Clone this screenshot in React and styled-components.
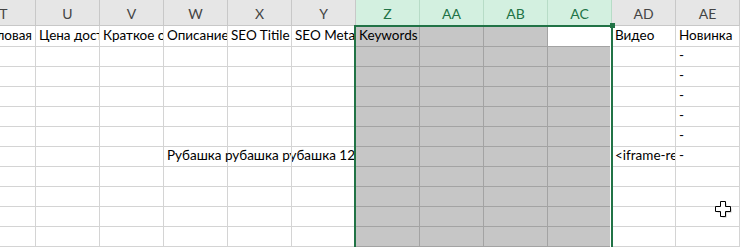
import React from "react";
import styled, { createGlobalStyle } from "styled-components";

const GlobalStyle = createGlobalStyle`
  html, body { margin: 0; padding: 0; background: #ffffff; }
  body { overflow: hidden; font-family: Lato, "Liberation Sans", sans-serif; }
`;

const COLS = ["T", "U", "V", "W", "X", "Y", "Z", "AA", "AB", "AC", "AD", "AE"];
const SELECTED = new Set(["Z", "AA", "AB", "AC"]);

const ROWS = [
  { T: "ловая", U: "Цена доставки", V: "Краткое описание", W: "Описание", X: "SEO Titile", Y: "SEO Meta Description", Z: "Keywords", AD: "Видео", AE: "Новинка" },
  { AE: "-" },
  { AE: "-" },
  { AE: "-" },
  { AE: "-" },
  { AE: "-" },
  { W: "Рубашка рубашка рубашка 123", AD: "<iframe-responsive", AE: "-" },
  {},
  {},
  {},
  {},
];

const SPILL = { 6: "W" };

const Sheet = styled.div`
  position: relative;
  width: 740px;
  height: 247px;
  overflow: hidden;
  display: grid;
  grid-template-columns: 36px repeat(11, 64px);
  grid-template-rows: 26px 21px repeat(10, 20px);
  font-family: Lato, "Liberation Sans", sans-serif;
  font-size: 13.5px;
  line-height: 16px;
  color: #000;
`;

const HeaderCell = styled.div`
  box-sizing: border-box;
  display: flex;
  align-items: flex-end;
  justify-content: ${(p) => (p.$partial ? "flex-end" : "center")};
  overflow: hidden;
  padding-bottom: 3px;
  font-size: 14px;
  background: ${(p) => (p.$selected ? "#d3f0e0" : "#e6e6e6")};
  color: ${(p) => (p.$selected ? "#217346" : "#444444")};
  border-right: 1px solid ${(p) => (p.$selected ? "#b7dcc7" : "#c8c8c8")};
  border-bottom: 1px solid ${(p) => (p.$selected ? "#217346" : "#c8c8c8")};
`;

const HeaderLabel = styled.span`
  flex-shrink: 0;
  width: 63px;
  text-align: center;
`;

const Cell = styled.div`
  box-sizing: border-box;
  display: flex;
  align-items: flex-end;
  justify-content: ${(p) => (p.$partial ? "flex-end" : "flex-start")};
  padding: 0 3px 3px 3px;
  white-space: nowrap;
  overflow: ${(p) => (p.$spill ? "visible" : "hidden")};
  background: ${(p) => (p.$active ? "#ffffff" : p.$selected ? "#c6c6c6" : "transparent")};
  border-right: 1px solid ${(p) => (p.$selected ? "#a3a3a3" : "#d4d4d4")};
  border-bottom: 1px solid ${(p) => (p.$selected ? "#a3a3a3" : "#d4d4d4")};
`;

const SelectionFrame = styled.div`
  position: absolute;
  left: 354px;
  top: 25px;
  width: 259px;
  height: 240px;
  box-sizing: border-box;
  border: 2px solid #217346;
  border-bottom: none;
  box-shadow: inset -1px 0 0 #ffffff;
  pointer-events: none;
`;

const FillHandle = styled.div`
  position: absolute;
  left: 610px;
  top: 23px;
  width: 5px;
  height: 5px;
  background: #217346;
`;

const Cursor = styled.svg`
  position: absolute;
  left: 715px;
  top: 201px;
  width: 17px;
  height: 17px;
`;

export default function App() {
  return (
    <>
      <GlobalStyle />
      <Sheet>
        {COLS.map((c, i) => (
          <HeaderCell key={c} $selected={SELECTED.has(c)} $partial={i === 0}>
            <HeaderLabel>{c}</HeaderLabel>
          </HeaderCell>
        ))}
        {ROWS.map((row, r) =>
          COLS.map((c, i) => (
            <Cell
              key={`${r}-${c}`}
              $selected={SELECTED.has(c)}
              $active={r === 0 && c === "AC"}
              $partial={i === 0}
              $spill={SPILL[r] === c}
            >
              {row[c] || ""}
            </Cell>
          ))
        )}
        <SelectionFrame />
        <FillHandle />
        <Cursor viewBox="0 0 17 17">
          <path d="M6.5 1.5H10.5V6.5H15.5V10.5H10.5V15.5H6.5V10.5H1.5V6.5H6.5Z" fill="#7a7a7a" transform="translate(1 1)" opacity="0.5" />
          <path d="M5.5 0.5H10.5V5.5H15.5V10.5H10.5V15.5H5.5V10.5H0.5V5.5H5.5Z" fill="#ffffff" stroke="#000000" strokeWidth="1" />
        </Cursor>
      </Sheet>
    </>
  );
}
